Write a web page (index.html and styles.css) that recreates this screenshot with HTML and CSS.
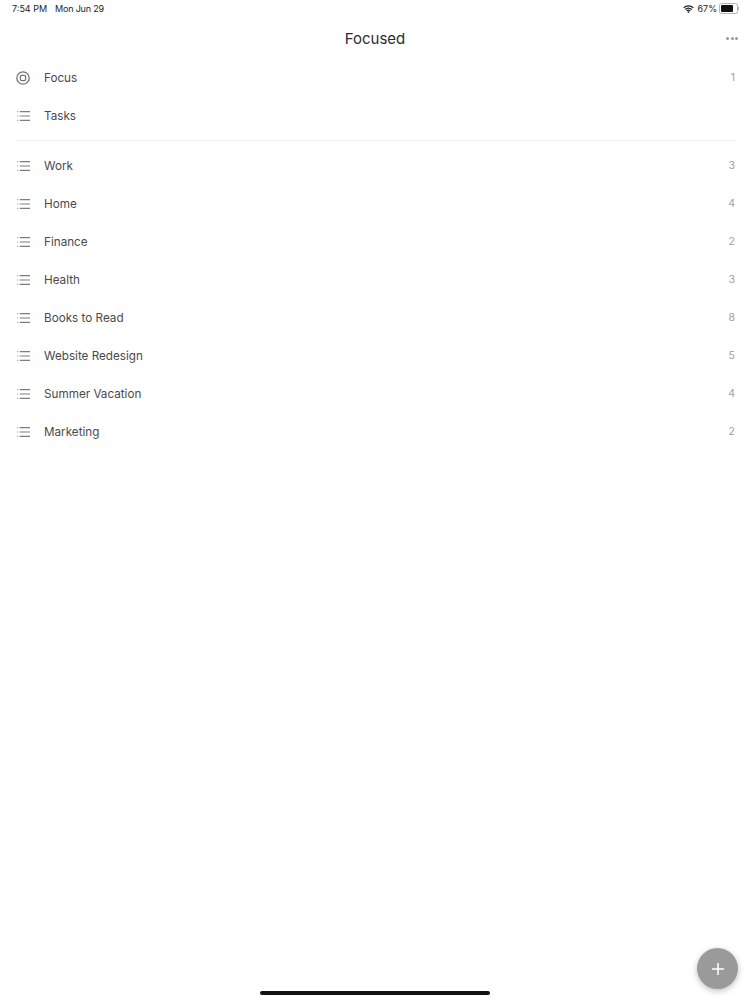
FILE: index.html
```html
<!DOCTYPE html>
<html lang="en">
<head>
  <meta charset="UTF-8">
  <meta name="viewport" content="width=device-width, initial-scale=1.0">
  <title>Focused</title>
  <link rel="stylesheet" href="styles.css">
</head>
<body>
  <svg class="sprites" width="0" height="0">
    <symbol id="list" viewBox="0 0 13 10">
      <path d="M0 .7h1.300M0 5h1.300M0 9.300h1.300" fill="none" stroke="#b0b0b0" stroke-width="1.200"/>
      <path d="M2.800 .7h10.200M2.800 5h10.200M2.800 9.300h10.200" fill="none" stroke="#7d7d7d" stroke-width="1.200"/>
    </symbol>
  </svg>

  <div class="status-bar">
    <div class="status-left"><span>7:54 PM</span><span class="date">Mon Jun 29</span></div>
    <div class="status-right">
      <svg class="wifi" width="11" height="8" viewBox="0 0 12 9">
        <path d="M.5 3.200a7.800 7.800 0 0 1 11 0M2.300 5a5.200 5.200 0 0 1 7.400 0M4 6.700a2.800 2.800 0 0 1 4 0" fill="none" stroke="#222" stroke-width="1.400"/>
        <circle cx="6" cy="8" r="1" fill="#222"/>
      </svg>
      <span>67%</span>
      <div class="battery"><div class="battery-level"></div></div>
      <div class="battery-tip"></div>
    </div>
  </div>

  <div class="header">
    <h1>Focused</h1>
    <div class="more"><i></i><i></i><i></i></div>
  </div>

  <div class="list">
    <div class="row">
      <svg class="icon" width="14" height="14" viewBox="0 0 14 14">
        <circle cx="7" cy="7" r="6.200" fill="none" stroke="#757575" stroke-width="1.300"/>
        <rect x="4.400" y="4.400" width="5.200" height="5.200" rx="1.400" fill="none" stroke="#757575" stroke-width="1.300"/>
      </svg>
      <span class="name">Focus</span><span class="count">1</span>
    </div>
    <div class="row">
      <svg class="icon icon-list"><use href="#list"/></svg>
      <span class="name">Tasks</span>
    </div>
  </div>

  <div class="divider"></div>

  <div class="list">
    <div class="row"><svg class="icon icon-list"><use href="#list"/></svg><span class="name">Work</span><span class="count">3</span></div>
    <div class="row"><svg class="icon icon-list"><use href="#list"/></svg><span class="name">Home</span><span class="count">4</span></div>
    <div class="row"><svg class="icon icon-list"><use href="#list"/></svg><span class="name">Finance</span><span class="count">2</span></div>
    <div class="row"><svg class="icon icon-list"><use href="#list"/></svg><span class="name">Health</span><span class="count">3</span></div>
    <div class="row"><svg class="icon icon-list"><use href="#list"/></svg><span class="name">Books to Read</span><span class="count">8</span></div>
    <div class="row"><svg class="icon icon-list"><use href="#list"/></svg><span class="name">Website Redesign</span><span class="count">5</span></div>
    <div class="row"><svg class="icon icon-list"><use href="#list"/></svg><span class="name">Summer Vacation</span><span class="count">4</span></div>
    <div class="row"><svg class="icon icon-list"><use href="#list"/></svg><span class="name">Marketing</span><span class="count">2</span></div>
  </div>

  <div class="fab">
    <svg width="12" height="12" viewBox="0 0 12 12"><path d="M6 0v12M0 6h12" stroke="#fff" stroke-width="1.500"/></svg>
  </div>
  <div class="home-bar"></div>
</body>
</html>
```

FILE: styles.css
```css
html, body {
  height: 100%;
}

body {
  margin: 0;
  position: relative;
  overflow: hidden;
  background: #fff;
  color: #4a4a4c;
  font-family: "Inter", "Liberation Sans", sans-serif;
}

.sprites {
  position: absolute;
}

.status-bar {
  display: flex;
  justify-content: space-between;
  align-items: center;
  box-sizing: border-box;
  height: 18px;
  padding: 0 11px 1px 12px;
  font-size: 9px;
  color: #222;
}

.status-left {
  display: flex;
  gap: 8px;
}

.date {
  letter-spacing: -0.2px;
}

.status-right {
  display: flex;
  align-items: center;
  gap: 2px;
}

.wifi {
  margin-right: 1px;
}

.battery {
  width: 15px;
  height: 7px;
  padding: 1px;
  border: 1px solid #b5b5b5;
  border-radius: 2.500px;
}

.battery-level {
  width: 78%;
  height: 100%;
  border-radius: 1px;
  background: #111;
}

.battery-tip {
  width: 1px;
  height: 3px;
  margin-left: -2px;
  background: #b5b5b5;
}

.header {
  display: flex;
  justify-content: center;
  align-items: center;
  position: relative;
  height: 40px;
}

.header h1 {
  margin: 0;
  font-size: 15px;
  font-weight: 400;
  color: #2c2c2e;
}

.more {
  position: absolute;
  right: 12px;
  top: 19px;
  display: flex;
  gap: 1.500px;
}

.more i {
  width: 3px;
  height: 3px;
  border-radius: 50%;
  background: #999;
}

.list {
  display: flex;
  flex-direction: column;
}

.row {
  display: flex;
  align-items: center;
  height: 38px;
  padding: 1px 15px 0 17px;
  box-sizing: border-box;
  font-size: 11.700px;
}

.icon {
  flex: none;
  margin-right: 14px;
  margin-left: -1px;
}

.icon-list {
  width: 13px;
  height: 10px;
  margin-left: 0;
  margin-right: 14px;
}

.name {
  flex: 1;
}

.count {
  font-size: 10.500px;
  color: #a0a0a0;
}

.divider {
  height: 1px;
  margin: 6px 14px 5px 16px;
  background: #f2f2f2;
}

.fab {
  position: absolute;
  right: 12px;
  bottom: 11px;
  display: flex;
  justify-content: center;
  align-items: center;
  width: 41px;
  height: 41px;
  border-radius: 50%;
  background: #9b9a9b;
  box-shadow: 0 2px 6px rgba(0, 0, 0, 0.25);
}

.home-bar {
  position: absolute;
  left: 260px;
  bottom: 5px;
  width: 230px;
  height: 4px;
  border-radius: 2px;
  background: #111;
}
```
